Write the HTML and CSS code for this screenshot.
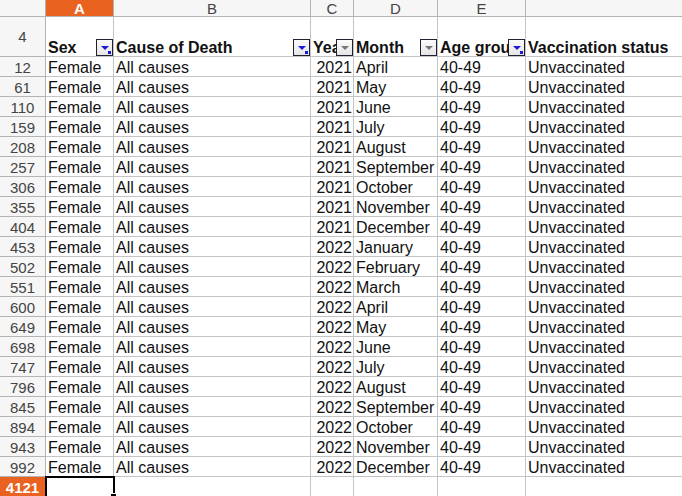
FILE: index.html
```html
<!DOCTYPE html>
<html lang="en">
<head>
	<meta charset="UTF-8">
	<title>Deaths by vaccination status</title>
	<link rel="stylesheet" href="styles.css">
</head>
<body>
	<div class="sheet">
		<div class="row colhead">
			<div class="cell corner"></div>
			<div class="cell on">A</div>
			<div class="cell">B</div>
			<div class="cell">C</div>
			<div class="cell">D</div>
			<div class="cell">E</div>
			<div class="cell"></div>
		</div>

		<div class="row titles">
			<div class="cell rh">4</div>
			<div class="cell">Sex<span class="filter active"></span></div>
			<div class="cell">Cause of Death<span class="filter active"></span></div>
			<div class="cell">Year<span class="filter"></span></div>
			<div class="cell">Month<span class="filter"></span></div>
			<div class="cell">Age group<span class="filter active"></span></div>
			<div class="cell">Vaccination status</div>
		</div>

		<div id="rows"></div>

		<div class="row">
			<div class="cell rh on">4121</div>
			<div class="cell sel"></div>
			<div class="cell"></div>
			<div class="cell"></div>
			<div class="cell"></div>
			<div class="cell"></div>
			<div class="cell"></div>
		</div>
	</div>

	<script type="text/javascript">
		var data = [
			[12, 2021, 'April'], [61, 2021, 'May'], [110, 2021, 'June'],
			[159, 2021, 'July'], [208, 2021, 'August'], [257, 2021, 'September'],
			[306, 2021, 'October'], [355, 2021, 'November'], [404, 2021, 'December'],
			[453, 2022, 'January'], [502, 2022, 'February'], [551, 2022, 'March'],
			[600, 2022, 'April'], [649, 2022, 'May'], [698, 2022, 'June'],
			[747, 2022, 'July'], [796, 2022, 'August'], [845, 2022, 'September'],
			[894, 2022, 'October'], [943, 2022, 'November'], [992, 2022, 'December']
		];
		var rows = document.getElementById('rows');
		var html = '';
		for (var i = 0; i < data.length; i++) {
			html += '<div class="row">'
				+ '<div class="cell rh">' + data[i][0] + '</div>'
				+ '<div class="cell">Female</div>'
				+ '<div class="cell">All causes</div>'
				+ '<div class="cell num">' + data[i][1] + '</div>'
				+ '<div class="cell">' + data[i][2] + '</div>'
				+ '<div class="cell">40-49</div>'
				+ '<div class="cell">Unvaccinated</div>'
				+ '</div>';
		}
		rows.innerHTML = html;
	</script>
</body>
</html>
```

FILE: styles.css
```css
body {
	margin: 0;
	width: 682px;
	height: 496px;
	overflow: hidden;
	background: #fff;
	font-family: "Liberation Sans", Arial, sans-serif;
}
.sheet {
	width: 682px;
}
.row {
	display: grid;
	grid-template-columns: 46px 68px 197px 43px 84px 88px 1fr;
	height: 20px;
}
.cell {
	position: relative;
	box-sizing: border-box;
	border-right: 1px solid #c4c4c4;
	border-bottom: 1px solid #c4c4c4;
	padding: 0 2px;
	font-size: 16px;
	line-height: 21px;
	color: #111;
	white-space: nowrap;
	overflow: hidden;
}
.row .cell:last-child {
	border-right: none;
}
.cell.num {
	text-align: right;
	padding-right: 1px;
}
.rh {
	background: #f6f6f6;
	border-color: #b4b4b4;
	text-align: center;
	font-size: 15px;
	color: #444;
}
.colhead {
	height: 17px;
}
.colhead .cell {
	background: #f6f6f6;
	border-color: #b4b4b4;
	text-align: center;
	font-size: 15px;
	line-height: 17px;
	color: #444;
}
.colhead .cell.on,
.rh.on {
	background: #e9621f;
	color: #fff;
	font-weight: bold;
}
.titles {
	height: 40px;
}
.titles .cell {
	display: flex;
	align-items: flex-end;
	font-weight: bold;
	line-height: 17px;
}
.titles .cell.rh {
	align-items: center;
	justify-content: center;
	font-weight: normal;
}
.filter {
	position: absolute;
	right: 0;
	bottom: 0;
	width: 17px;
	height: 17px;
	box-sizing: border-box;
	border: 1px solid #202030;
	background: linear-gradient(#fbfbfb, #e6e6e6);
}
.filter::before {
	content: "";
	position: absolute;
	left: 4px;
	top: 6px;
	border-left: 4px solid transparent;
	border-right: 4px solid transparent;
	border-top: 4px solid #777;
}
.filter.active::before {
	border-top-color: #1c1cd8;
}
.filter.active::after {
	content: "";
	position: absolute;
	right: 1px;
	bottom: 1px;
	width: 3px;
	height: 3px;
	background: #1c1cd8;
}
.sel {
	overflow: visible;
	outline: 2px solid #000;
	outline-offset: -1px;
}
.sel::after {
	content: "";
	position: absolute;
	right: -4px;
	bottom: -4px;
	width: 5px;
	height: 5px;
	background: #000;
	border: 1px solid #fff;
}
```
